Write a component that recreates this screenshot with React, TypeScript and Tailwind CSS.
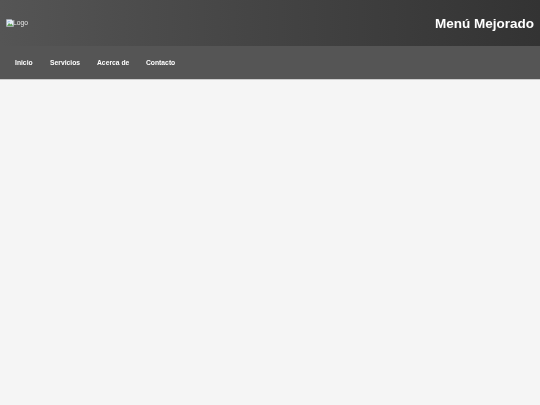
const links = ['Inicio', 'Servicios', 'Acerca de', 'Contacto']

function BrokenImageIcon() {
  return (
    <svg width="8" height="8" viewBox="0 0 16 16" className="absolute left-0 top-0">
      <path d="M1 1h10l4 4v10H1z" fill="#e8eef7" stroke="#a9b0b8" strokeWidth="1" />
      <path d="M2 14l4-6 3 3 2-2 3 5z" fill="#5f9e58" />
      <path d="M2 7c2-3 6-3 7-1z" fill="#8fb8e8" />
    </svg>
  )
}

export default function App() {
  return (
    <div className="min-h-[405px] bg-[#f5f5f5] font-['Liberation_Sans',Arial,sans-serif]">
      <header className="flex h-[46px] items-center justify-between bg-gradient-to-r from-[#555555] to-[#333333] px-[6px] text-white">
        <div className="relative h-[8px] pl-[7px] text-[6.75px] leading-[8px] text-[#e6e6e6] [will-change:transform]">
          <BrokenImageIcon />
          Logo
        </div>
        <h1 className="pt-px text-[13.5px] leading-none font-bold [will-change:transform]">Menú Mejorado</h1>
      </header>
      <nav className="flex h-[34px] items-center gap-[17px] border-b border-[#cccccc] bg-[#555555] pl-[15px] pt-px text-[6.75px] font-bold text-white">
        {links.map((link) => (
          <a key={link} href="#" className="leading-none [will-change:transform]">
            {link}
          </a>
        ))}
      </nav>
    </div>
  )
}
